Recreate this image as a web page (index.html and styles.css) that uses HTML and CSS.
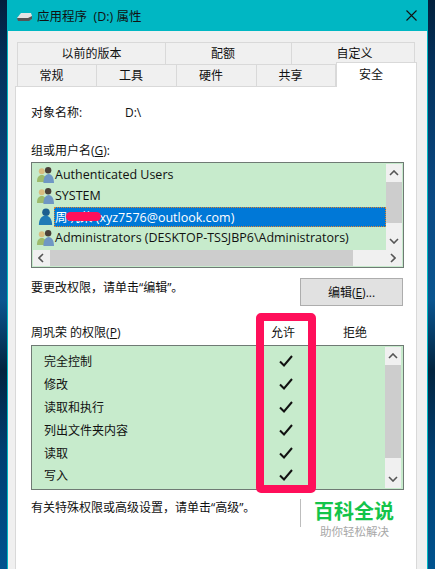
FILE: index.html
```html
<!DOCTYPE html>
<html lang="zh-CN">
<head>
    <meta charset="UTF-8">
    <title>应用程序 (D:) 属性</title>
    <link rel="stylesheet" href="styles.css">
</head>
<body>
    <svg class="defs" width="0" height="0">
        <defs>
            <symbol id="users" viewBox="0 0 16 16">
                <circle cx="4.500" cy="5" r="2.800" fill="#d9bd80"/>
                <path d="M0 15c0-4.500 1.800-6.500 4.500-6.500S9 10.500 9 15z" fill="#9dbb6c"/>
                <circle cx="10.500" cy="4" r="3" fill="#4a4038"/>
                <path d="M6 16c0-5 2-8.500 5-8.500s5 3.500 5 8.500z" fill="#6f97c4"/>
            </symbol>
            <symbol id="user" viewBox="0 0 16 18">
                <circle cx="8.500" cy="4.500" r="4" fill="#1c5f8f"/>
                <path d="M1 18c0-6 3-10 7-10s7 4 7 10z" fill="#1f7ab5"/>
            </symbol>
            <symbol id="check" viewBox="0 0 14 12">
                <path d="M1 6.500l4 4L13 1" fill="none" stroke="#111" stroke-width="2"/>
            </symbol>
            <symbol id="up" viewBox="0 0 10 6">
                <path d="M1 5l4-4 4 4" fill="none" stroke="#555" stroke-width="1.600"/>
            </symbol>
        </defs>
    </svg>

    <div class="window">
        <div class="titlebar">
            <svg class="drive" width="15" height="10" viewBox="0 0 15 10">
                <path d="M0 6l4-5h10l1 3-1 4H2z" fill="#e4e4e4"/>
                <path d="M0 6l11 0 4-2v3l-3 2H1z" fill="#555"/>
            </svg>
            <span class="title">应用程序&nbsp; (D:) 属性</span>
            <svg class="close" width="11" height="11" viewBox="0 0 11 11">
                <path d="M.5.5l10 10M10.500.5l-10 10" stroke="#111" stroke-width="1.100"/>
            </svg>
        </div>

        <div class="tabs">
            <div class="tab-row row-back">
                <div class="tab w-149">以前的版本</div>
                <div class="tab w-126 shift-left">配额</div>
                <div class="tab w-123 shift-right">自定义</div>
            </div>
            <div class="tab-row">
                <div class="tab w-80 shift-left">常规</div>
                <div class="tab w-80 shift-left">工具</div>
                <div class="tab w-80 shift-left">硬件</div>
                <div class="tab w-79 shift-left">共享</div>
                <div class="tab tab-active shift-left">安全</div>
            </div>
        </div>

        <div class="panel">
            <div class="object-name"><span class="object-label">对象名称:</span><span>D:\</span></div>
            <div class="group-label">组或用户名(<u>G</u>):</div>

            <div class="listbox users-box">
                <div class="users-main">
                    <div class="users-rows">
                        <div class="user-row"><svg class="user-icon"><use href="#users"/></svg><span class="user-name">Authenticated Users</span></div>
                        <div class="user-row"><svg class="user-icon"><use href="#users"/></svg><span class="user-name">SYSTEM</span></div>
                        <div class="user-row"><svg class="user-icon"><use href="#user"/></svg><span class="user-name selected">周巩荣 (xyz7576@outlook.com)<i class="blot"></i></span></div>
                        <div class="user-row"><svg class="user-icon"><use href="#users"/></svg><span class="user-name">Administrators (DESKTOP-TSSJBP6\Administrators)</span></div>
                    </div>
                    <div class="vscroll">
                        <svg class="arrow"><use href="#up"/></svg>
                        <div class="thumb users-thumb"></div>
                        <svg class="arrow flip push"><use href="#up"/></svg>
                    </div>
                </div>
                <div class="hscroll">
                    <svg class="arrow turn-left"><use href="#up"/></svg>
                    <div class="hthumb"></div>
                    <svg class="arrow turn-right"><use href="#up"/></svg>
                </div>
            </div>

            <div class="edit-row">
                <span>要更改权限，请单击“编辑”。</span>
                <div class="button">编辑(<u>E</u>)...</div>
            </div>

            <div class="perm-head">
                <span class="perm-title">周巩荣 的权限(<u>P</u>)</span>
                <span class="perm-allow">允许</span>
                <span class="perm-deny">拒绝</span>
            </div>

            <div class="listbox perm-box">
                <div class="perm-rows">
                    <div class="perm-row"><span>完全控制</span><svg class="check"><use href="#check"/></svg></div>
                    <div class="perm-row"><span>修改</span><svg class="check"><use href="#check"/></svg></div>
                    <div class="perm-row"><span>读取和执行</span><svg class="check"><use href="#check"/></svg></div>
                    <div class="perm-row"><span>列出文件夹内容</span><svg class="check"><use href="#check"/></svg></div>
                    <div class="perm-row"><span>读取</span><svg class="check"><use href="#check"/></svg></div>
                    <div class="perm-row"><span>写入</span><svg class="check"><use href="#check"/></svg></div>
                </div>
                <div class="vscroll perm-v">
                    <svg class="arrow"><use href="#up"/></svg>
                    <div class="thumb perm-thumb"></div>
                    <svg class="arrow flip push"><use href="#up"/></svg>
                </div>
            </div>

            <div class="footer-row">
                <span class="footer-text">有关特殊权限或高级设置，请单击“高级”。</span>
                <div class="brand">
                    <div class="brand-name">百科全说</div>
                    <div class="brand-sub">助你轻松解决</div>
                </div>
            </div>

            <div class="highlight"></div>
        </div>
    </div>
</body>
</html>
```

FILE: styles.css
```css
* {
    box-sizing: border-box;
}
html, body {
    height: 569px;
    overflow: hidden;
}
body {
    margin: 0;
    padding-left: 7px;
    font-family: "Open Sans", "Noto Sans CJK SC", sans-serif;
    font-size: 12px;
    color: #111;
    background: linear-gradient(#02203c 0, #03305a 60px, #0a4a85 200px, #0a5590 300px, #02243f 370px, #003e70 450px, #00538f 569px);
}
.defs {
    display: block;
    position: absolute;
}
u {
    text-underline-offset: 1px;
}
.window {
    width: 421px;
    height: 569px;
    background: #f0f0f0;
    border-left: 1px solid #00b7c3;
    border-right: 1px solid #00b7c3;
}
.titlebar {
    height: 31px;
    display: flex;
    align-items: center;
    padding-left: 9px;
    background: #00b7c3;
}
.drive {
    margin-right: 5px;
    margin-top: 2px;
}
.title {
    font-size: 12.5px;
}
.close {
    margin-left: auto;
    margin-right: 10px;
}
.tabs {
    padding: 11px 0 0 9px;
}
.tab-row {
    display: flex;
    height: 22px;
}
.tab {
    display: flex;
    align-items: center;
    justify-content: center;
    padding-bottom: 1px;
    background: #f0f0f0;
    border: 1px solid #d9d9d9;
    border-left-width: 0;
    border-bottom-width: 0;
}
.tab:first-child {
    border-left-width: 1px;
}
.shift-left {
    padding-right: 11px;
}
.shift-right {
    padding-left: 3px;
}
.w-149 { width: 149px; }
.w-126 { width: 126px; }
.w-123 { width: 123px; }
.w-80 { width: 80px; }
.w-79 { width: 79px; }
.tab-active {
    width: 81px;
    height: 25px;
    margin-top: -2px;
    padding-bottom: 3px;
    background: #fff;
    border-left-width: 1px;
    border-right-width: 1px;
    border-top-width: 1px;
    position: relative;
    z-index: 1;
}
.panel {
    position: relative;
    width: 402px;
    height: 483px;
    margin-left: 7px;
    padding: 0 13px 0 15px;
    background: #fff;
    border-left: 1px solid #d9d9d9;
    border-right: 1px solid #d9d9d9;
    border-top: 1px solid #d9d9d9;
}
.object-name {
    display: flex;
    height: 18px;
    margin-top: 16px;
    align-items: center;
}
.object-label {
    width: 94px;
}
.group-label {
    height: 18px;
    margin-top: 20px;
    display: flex;
    align-items: center;
    white-space: pre;
}
.listbox {
    width: 373px;
    border: 1px solid #6f7a74;
    background: #c7ebcc;
}
.users-box {
    height: 106px;
    margin-top: 3px;
    padding: 1px;
}
.users-main {
    display: flex;
    height: 86px;
}
.users-rows {
    flex: 1;
}
.user-row {
    display: flex;
    align-items: center;
    height: 21px;
    padding-left: 4px;
}
.user-icon {
    width: 17px;
    height: 17px;
    flex: none;
}
.user-name {
    position: relative;
    display: flex;
    align-items: center;
    flex: 1;
    height: 20px;
    padding-left: 1px;
    font-size: 12.5px;
    white-space: pre;
}
.selected {
    color: #fff;
    background: #0078d7;
    outline: 1px dotted #e0852b;
    outline-offset: -1px;
}
.blot {
    position: absolute;
    left: 12px;
    top: 5px;
    width: 35px;
    height: 9px;
    border-radius: 6px;
    background: #ff0f5a;
}
.vscroll {
    display: flex;
    flex-direction: column;
    align-items: center;
    width: 16px;
    background: #f0f0f0;
}
.arrow {
    flex: none;
    width: 10px;
    height: 6px;
    margin: 6px 0;
}
.flip {
    transform: rotate(180deg);
}
.push {
    margin-top: auto;
}
.thumb {
    width: 100%;
    background: #cdcdcd;
}
.users-thumb {
    height: 41px;
}
.hscroll {
    display: flex;
    align-items: center;
    height: 16px;
    background: #f0f0f0;
}
.hscroll .arrow {
    margin: 0 3px;
    width: 10px;
}
.turn-left {
    transform: rotate(-90deg);
}
.turn-right {
    transform: rotate(90deg);
    margin-left: auto !important;
    margin-right: 4px !important;
}
.hthumb {
    width: 303px;
    height: 100%;
    margin-left: 1px;
    background: #cdcdcd;
}
.edit-row {
    display: flex;
    justify-content: space-between;
    height: 28px;
    margin-top: 10px;
}
.button {
    display: flex;
    align-items: center;
    justify-content: center;
    width: 103px;
    height: 28px;
    background: #e1e1e1;
    border: 1px solid #adadad;
    white-space: pre;
}
.perm-head {
    display: flex;
    align-items: center;
    height: 18px;
    margin-top: 17px;
    white-space: pre;
}
.perm-title {
    width: 240px;
}
.perm-allow {
    width: 72px;
}
.perm-box {
    display: flex;
    height: 145px;
    margin-top: 4px;
    padding-bottom: 1px;
}
.perm-rows {
    flex: 1;
    padding-top: 3.500px;
}
.perm-row {
    display: flex;
    align-items: center;
    height: 22.900px;
    padding-left: 12px;
}
.perm-row span {
    width: 235px;
}
.check {
    width: 14px;
    height: 12px;
}
.perm-v {
    margin: 1px 2px 0 0;
}
.perm-thumb {
    height: 93px;
}
.footer-row {
    display: flex;
    justify-content: space-between;
    margin-top: 9px;
}
.footer-text {
    line-height: 18px;
}
.brand {
    width: 103px;
    height: 28px;
    padding-left: 13px;
    border-left: 1px solid #bdbdbd;
}
.brand-name {
    font-size: 20px;
    line-height: 26px;
    font-weight: 700;
    color: #14c44a;
    white-space: nowrap;
}
.brand-sub {
    font-size: 11.5px;
    line-height: 14px;
    margin-left: 6px;
    color: #a8a8a8;
    white-space: nowrap;
}
/* red annotation drawn over the screenshot */
.highlight {
    position: absolute;
    left: 240px;
    top: 226px;
    width: 60px;
    height: 180px;
    border: 8px solid #ff0f5a;
    border-radius: 5px;
}
```
